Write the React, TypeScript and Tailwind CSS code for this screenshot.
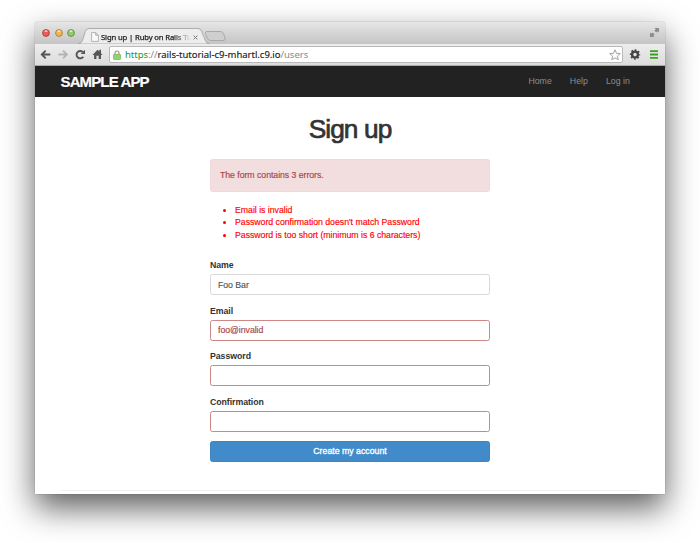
import React from "react";

const helvetica = "font-['Liberation_Sans',Arial,sans-serif]";
const lucida = "font-['Noto_Sans','Open_Sans',sans-serif]";

function Light({ fill, ring }: { fill: string; ring: string }) {
  return (
    <svg width="8" height="8" viewBox="0 0 8 8">
      <circle cx="4" cy="4" r="3.4" fill={fill} stroke={ring} strokeWidth="0.9" />
      <ellipse cx="4" cy="2.2" rx="1.6" ry="0.9" fill="#fff" opacity="0.65" />
    </svg>
  );
}

function TabStrip() {
  return (
    <div className="relative flex h-[22px] shrink-0 bg-linear-to-b from-[#e6e6e6] to-[#c4c4c4]">
      <div className="flex items-center gap-[4.500px] pl-[7px]">
        <Light fill="#ee5b57" ring="#a5403f" />
        <Light fill="#f3b64e" ring="#a97a35" />
        <Light fill="#92cb6a" ring="#5c8f42" />
      </div>
      <svg className="absolute left-[43px] top-[6px]" width="150" height="16" viewBox="0 0 150 16">
        <path d="M128.500 3.500H142.500Q144.500 3.500 145.500 5.500L147 10Q147.700 12.500 145 12.500H132.500Q130.500 12.500 129.500 10.500L127.500 5.500Q127 3.500 128.500 3.500Z" fill="#cfcfcf" stroke="#a0a0a0" strokeWidth="0.8" />
        <path d="M0 16Q3.500 15.500 4.500 12.500L7.300 3.500Q8.300.5 11 .5H120Q122.500.5 123.500 3L127.300 12.500Q128.500 15.500 131.500 16Z" fill="#ededed" stroke="#a0a0a0" strokeWidth="0.8" />
      </svg>
      <div className="relative ml-[16px] mt-[8px] flex h-[14px] w-[112px] shrink-0 items-center">
        <svg width="8" height="10" viewBox="0 0 8 10" className="shrink-0">
          <path d="M.6.6H4.700L7.400 3.300V9.400H.6ZM4.700.6V3.300H7.400" fill="#fafafa" stroke="#a2a2a2" strokeWidth="0.8" />
        </svg>
        <span className={`${lucida} ml-[2px] w-[90px] shrink-0 whitespace-nowrap text-[7.700px] leading-[13px] tracking-[-0.14px] text-[#222] [-webkit-text-stroke:0.25px_#222] mask-r-from-80% mask-r-to-100%`}>
          Sign up | Ruby on Rails Tut
        </span>
        <svg width="5" height="5" viewBox="0 0 5 5" className="ml-[2px] shrink-0">
          <path d="M.6.6 4.400 4.400M4.400.6.6 4.400" stroke="#777" strokeWidth="1" />
        </svg>
      </div>
      <svg className="absolute right-[6px] top-[6px]" width="9" height="9" viewBox="0 0 9 9" fill="#8b8b8b">
        <path d="M4.500 0H9V4.500L7.700 3.200 6.300 4.600 4.400 2.700 5.800 1.300ZM0 4.500 1.300 5.800 2.700 4.400 4.600 6.300 3.200 7.700 4.500 9H0Z" />
      </svg>
    </div>
  );
}

function Toolbar() {
  return (
    <div className="flex h-[22px] shrink-0 items-center border-b border-[#a9a9a9] bg-linear-to-b from-[#ededed] to-[#dcdcdc]">
      <svg width="74" height="21" viewBox="0 0 74 21" fill="none" className="shrink-0">
        <path d="M15.300 10.500H7M10.700 6.600 6.800 10.500 10.700 14.400" stroke="#555" strokeWidth="1.900" />
        <path d="M23.500 10.500H31.500M28 6.600 31.900 10.500 28 14.400" stroke="#b5b5b5" strokeWidth="1.900" />
        <path d="M48.300 12.700A3.700 3.700 0 1 1 47.700 7.900" stroke="#555" strokeWidth="1.900" />
        <path d="M50 5.800V10.100H45.600Z" fill="#555" />
        <path d="M57.500 10.900 62.500 5.700 64.300 7.500V5.800H66V9.200L67.500 10.900H66V15H63.700V11.800H61.400V15H59.100V10.900Z" fill="#555" />
      </svg>
      <div className="flex h-[17px] w-[514px] shrink-0 items-center rounded-[2px] border border-[#b9b9b9] bg-white pl-[3px] pr-[1px]">
        <svg width="8" height="10" viewBox="0 0 8 10" className="shrink-0">
          <path d="M2 5V3.200Q2 1 4 1T6 3.200V5" fill="none" stroke="#999" strokeWidth="1.200" />
          <rect x=".5" y="4.300" width="7" height="5.200" rx=".8" fill="#8fd36c" stroke="#7aba5c" strokeWidth="0.8" />
        </svg>
        <span className={`${lucida} ml-[4px] whitespace-nowrap text-[9.500px] leading-[15px] tracking-[-0.020px] text-[#888]`}>
          <span className="text-[#16962b]">https</span>://<span className="text-[#222] [-webkit-text-stroke:0.15px_#222]">rails-tutorial-c9-mhartl.c9.io</span>/users
        </span>
        <svg width="12" height="12" viewBox="0 0 12 12" className="ml-auto shrink-0">
          <path d="M6 .8 7.500 4.300 11.300 4.600 8.400 7.100 9.300 10.800 6 8.800 2.700 10.800 3.600 7.100.7 4.600 4.500 4.300Z" fill="#fff" stroke="#999" strokeWidth="0.9" strokeLinejoin="round" />
        </svg>
      </div>
      <svg width="42" height="21" viewBox="0 0 42 21" className="shrink-0">
        <g transform="translate(12 10.500)">
          <circle r="2.900" fill="none" stroke="#444" strokeWidth="2.400" />
          <circle r="4.400" fill="none" stroke="#444" strokeWidth="1.600" strokeDasharray="1.700 1.756" strokeDashoffset="0.850" />
        </g>
        <path d="M27 7.200H35M27 10.500H35M27 13.800H35" stroke="#35a51c" strokeWidth="1.800" />
      </svg>
    </div>
  );
}

function Field({ label, value, error }: { label: string; value: string; error?: boolean }) {
  return (
    <div className="mb-[9.500px]">
      <label className="mb-[3px] block text-[8.750px] font-bold leading-[12px] tracking-[-0.05px] text-[#333]">{label}</label>
      <div
        className={
          error
            ? "flex h-[21px] items-center rounded-[2.500px] border border-[#cc8786] px-[7px] text-[8.750px] text-[#a94442]"
            : "flex h-[21px] items-center rounded-[2.500px] border border-[#d8d8d8] px-[7px] text-[8.750px] text-[#555]"
        }
      >
        <span className="relative top-[0.500px] tracking-[-0.05px] [-webkit-text-stroke:0.15px_currentColor]">{value}</span>
      </div>
    </div>
  );
}

export default function App() {
  return (
    <div className="h-[543px] w-[700px] overflow-hidden bg-white px-[35px] pt-[22px]">
      <div className="flex h-[472px] w-[630px] flex-col rounded-t-[3px] bg-white shadow-[0_0_1px_rgba(0,0,0,0.6),0_14px_32px_rgba(0,0,0,0.63)]">
        <div className="overflow-hidden rounded-t-[3px]">
          <TabStrip />
        </div>
        <Toolbar />
        <div className={`${helvetica} flex min-h-0 flex-1 flex-col overflow-hidden text-[8.750px]`}>
          <nav className="flex h-[31px] shrink-0 items-center justify-between bg-[#222] pl-[25.500px] pr-[35px]">
            <span className="relative top-px text-[15px] font-bold tracking-[-0.87px] text-white [-webkit-text-stroke:0.2px_#fff]">SAMPLE APP</span>
            <div className="flex gap-[18px] tracking-[0.03px] text-[#8d8d8d]">
              <span>Home</span>
              <span>Help</span>
              <span>Log in</span>
            </div>
          </nav>
          <main className="mx-auto w-[280px]">
            <h1 className="mt-[17px] text-center text-[26.250px] leading-[30px] tracking-[-0.900px] text-[#333] [-webkit-text-stroke:0.700px_#333]">Sign up</h1>
            <div className="mt-[15px] flex h-[33px] items-center rounded-[2.500px] border border-[#efd8dc] bg-[#f2dede] px-[9px] tracking-[-0.05px] text-[#a94442] [-webkit-text-stroke:0.15px_#a94442]">
              The form contains 3 errors.
            </div>
            <ul className="mt-[12px] list-disc pl-[25px] leading-[12.300px] tracking-[-0.03px] text-[#f00] [-webkit-text-stroke:0.15px_#f00]">
              <li>Email is invalid</li>
              <li>Password confirmation doesn't match Password</li>
              <li>Password is too short (minimum is 6 characters)</li>
            </ul>
            <form className="mt-[18.500px]">
              <Field label="Name" value="Foo Bar" />
              <Field label="Email" value="foo@invalid" error />
              <Field label="Password" value="" error />
              <Field label="Confirmation" value="" error />
              <button type="button" className="block h-[21px] w-full rounded-[2.500px] border border-[#3d85c3] bg-[#428bca] text-[8.750px] leading-[19px] text-white [-webkit-text-stroke:0.3px_#fff]">
                Create my account
              </button>
            </form>
          </main>
          <div className="mx-[26px] mt-[27.500px] h-px shrink-0 bg-[#f1f1f1]" />
        </div>
      </div>
    </div>
  );
}
